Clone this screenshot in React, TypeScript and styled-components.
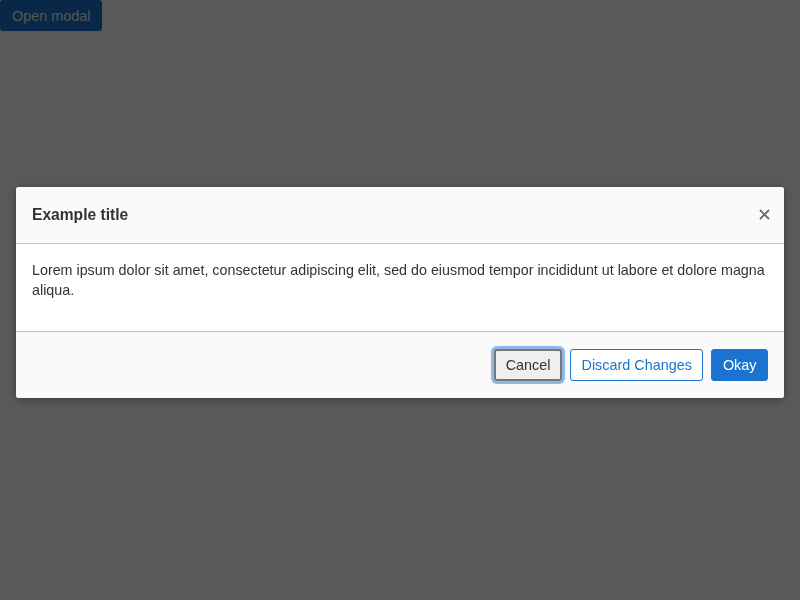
import React from "react";
import styled, { createGlobalStyle } from "styled-components";

const GlobalStyle = createGlobalStyle`
  html, body {
    margin: 0;
    padding: 0;
    background: #fff;
    font-family: "Liberation Sans", Arial, sans-serif;
  }
`;

const OpenButton = styled.button`
  font-family: "Liberation Sans", Arial, sans-serif;
  font-size: 14.4px;
  height: 31px;
  padding: 0 12px;
  border: none;
  border-radius: 3px;
  background: #1a73d0;
  color: #f2f2f2;
  cursor: pointer;
`;

const Overlay = styled.div`
  position: fixed;
  inset: 0;
  background: rgba(0, 0, 0, 0.65);
  display: flex;
  align-items: center;
  justify-content: center;
  padding-bottom: 16px;
  box-sizing: border-box;
`;

const Dialog = styled.div`
  width: 768px;
  background: #fff;
  border-radius: 3px;
  box-shadow: 0 2px 8px rgba(0, 0, 0, 0.35);
  overflow: hidden;
`;

const Header = styled.div`
  height: 56px;
  box-sizing: content-box;
  display: flex;
  align-items: center;
  justify-content: space-between;
  padding: 0 14px 0 16px;
  background: #fafafa;
  border-bottom: 1px solid #c4c4c4;
`;

const Title = styled.h2`
  margin: 0;
  font-size: 15.6px;
  font-weight: 700;
  color: #333;
`;

const CloseButton = styled.button`
  flex-shrink: 0;
  border: none;
  background: none;
  padding: 0;
  width: 11px;
  height: 11px;
  display: flex;
  align-items: center;
  justify-content: center;
  cursor: pointer;

  svg {
    display: block;
    flex-shrink: 0;
  }
`;

const Body = styled.div`
  padding: 16px 8px 31px 16px;
  font-size: 14.3px;
  line-height: 20px;
  color: #333;
`;

const Footer = styled.div`
  display: flex;
  justify-content: flex-end;
  gap: 8px;
  padding: 17px 16px;
  background: #fafafa;
  border-top: 1px solid #c4c4c4;
`;

const Button = styled.button<{ $variant: "default" | "outline" | "primary" }>`
  font-family: "Liberation Sans", Arial, sans-serif;
  font-size: 14.4px;
  height: 32px;
  padding: 0 10.5px;
  border-radius: 3px;
  cursor: pointer;
  box-sizing: border-box;
  ${({ $variant }) =>
    $variant === "default"
      ? `
    background: #efefef;
    color: #333;
    border: 2px solid #767676;
    box-shadow: 0 0 0 3px #8fb8e6;
    padding: 0 9.5px;
  `
      : $variant === "outline"
      ? `
    background: #fff;
    color: #1a73d0;
    border: 1px solid #1a73d0;
  `
      : `
    background: #1a73d0;
    color: #fff;
    border: 1px solid #1a73d0;
  `}
`;

export default function App() {
  return (
    <>
      <GlobalStyle />
      <OpenButton type="button">Open modal</OpenButton>
      <Overlay>
        <Dialog role="dialog" aria-modal>
          <Header>
            <Title>Example title</Title>
            <CloseButton aria-label="Close">
              <svg width="11" height="11" viewBox="0 0 11 11">
                <path
                  d="M1 1L10 10M10 1L1 10"
                  stroke="#6a6a6a"
                  strokeWidth="1.8"
                />
              </svg>
            </CloseButton>
          </Header>
          <Body>
            Lorem ipsum dolor sit amet, consectetur adipiscing elit, sed do
            eiusmod tempor incididunt ut labore et dolore magna aliqua.
          </Body>
          <Footer>
            <Button $variant="default">Cancel</Button>
            <Button $variant="outline">Discard Changes</Button>
            <Button $variant="primary">Okay</Button>
          </Footer>
        </Dialog>
      </Overlay>
    </>
  );
}
